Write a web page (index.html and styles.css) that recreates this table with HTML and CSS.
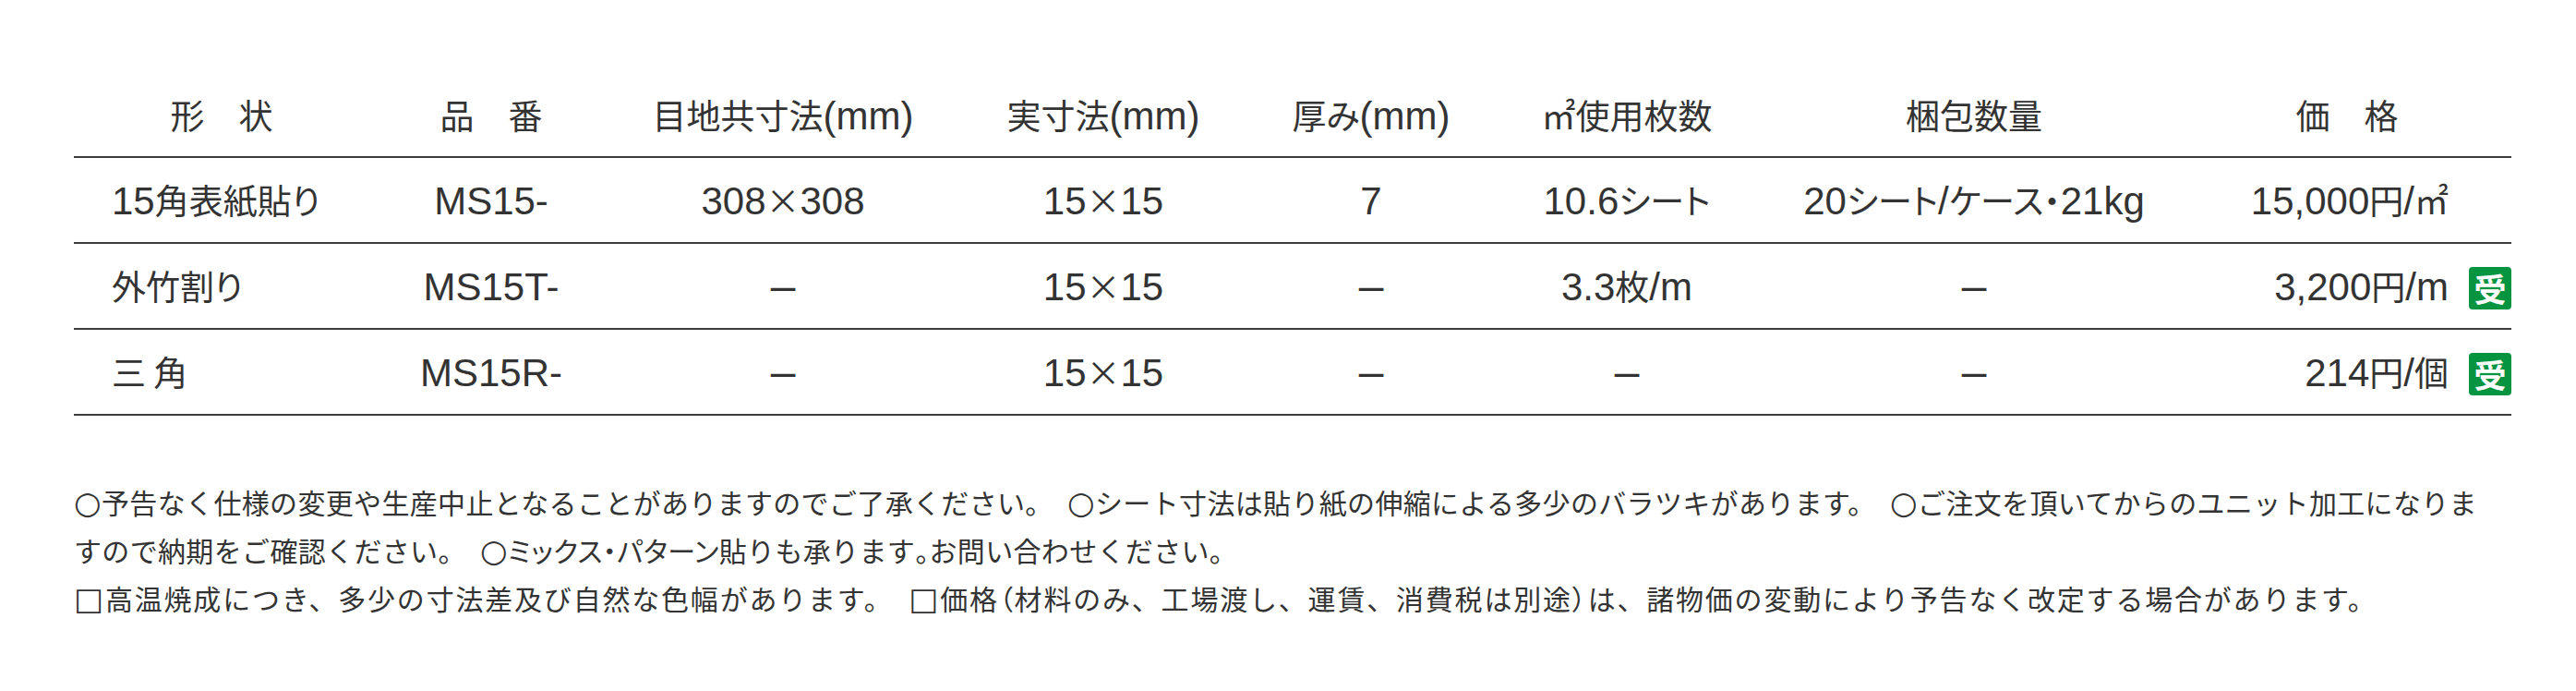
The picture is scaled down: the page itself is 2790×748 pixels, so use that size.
FILE: index.html
```html
<!DOCTYPE html>
<html lang="ja">
<head>
<meta charset="utf-8">
<title>15角表紙貼り 仕様</title>
<link rel="stylesheet" href="styles.css">
</head>
<body>
<div class="page">
  <div class="spec">
    <div class="row head">
      <div class="c">形　状</div>
      <div class="c">品　番</div>
      <div class="c">目地共寸法<span class="l">(mm)</span></div>
      <div class="c">実寸法<span class="l">(mm)</span></div>
      <div class="c">厚み<span class="l">(mm)</span></div>
      <div class="c">㎡使用枚数</div>
      <div class="c">梱包数量</div>
      <div class="c">価　格</div>
    </div>
    <div class="row item">
      <div class="c name"><span class="l">15</span>角表紙貼り</div>
      <div class="c"><span class="l">MS15-</span></div>
      <div class="c"><span class="l">308</span>×<span class="l">308</span></div>
      <div class="c"><span class="l">15</span>×<span class="l">15</span></div>
      <div class="c"><span class="l">7</span></div>
      <div class="c"><span class="l">10.6</span>シート</div>
      <div class="c"><span class="l">20</span>シート<span class="l">/</span>ケース・<span class="l">21kg</span></div>
      <div class="c price pad"><span class="l">15,000</span>円<span class="l">/</span>㎡</div>
    </div>
    <div class="row item">
      <div class="c name">外竹割り</div>
      <div class="c"><span class="l">MS15T-</span></div>
      <div class="c"><span class="dash">–</span></div>
      <div class="c"><span class="l">15</span>×<span class="l">15</span></div>
      <div class="c"><span class="dash">–</span></div>
      <div class="c"><span class="l">3.3</span>枚<span class="l">/m</span></div>
      <div class="c"><span class="dash">–</span></div>
      <div class="c price"><span class="l">3,200</span>円<span class="l">/m</span><span class="badge">受</span></div>
    </div>
    <div class="row item">
      <div class="c name">三 角</div>
      <div class="c"><span class="l">MS15R-</span></div>
      <div class="c"><span class="dash">–</span></div>
      <div class="c"><span class="l">15</span>×<span class="l">15</span></div>
      <div class="c"><span class="dash">–</span></div>
      <div class="c"><span class="dash">–</span></div>
      <div class="c"><span class="dash">–</span></div>
      <div class="c price"><span class="l">214</span>円<span class="l">/</span>個<span class="badge">受</span></div>
    </div>
  </div>
  <div class="notes">
    <p class="n1"><span class="mk">○</span>予告なく仕様の変更や生産中止となることがありますのでご了承ください。　<span class="mk">○</span>シート寸法は貼り紙の伸縮による多少のバラツキがあります。　<span class="mk">○</span>ご注文を頂いてからのユニット加工になりま<br>すので納期をご確認ください。　<span class="mk">○</span><span class="pr">ミックス・パターン</span>貼りも承ります<span class="pr">。</span>お問い合わせください。</p>
    <p class="n2"><span class="mk">□</span>高温焼成につき、多少の寸法差及び自然な色幅があります。　<span class="mk">□</span>価格<span class="pr">（</span>材料のみ、工場渡し、運賃、消費税は別途<span class="pr">）</span>は、諸物価の変動により予告なく改定する場合があります。</p>
  </div>
</div>
</body>
</html>
```

FILE: styles.css
```css
html, body {
  margin: 0;
  padding: 0;
  background: #ffffff;
}

body {
  color: #333333;
  font-family: "Noto Sans CJK JP", sans-serif;
}

.page {
  width: 2640px;
  padding: 80px 0 0 80px;
}

.row {
  display: grid;
  grid-template-columns: 320px 264px 368px 326px 254px 300px 452px 356px;
  font-feature-settings: "palt";
}

.c {
  font-size: 37px;
  text-align: center;
  white-space: nowrap;
}

.head .c {
  height: 89px;
  line-height: 89px;
}

.item {
  border-top: 2px solid #3c3c3c;
}

.item:last-child {
  border-bottom: 2px solid #3c3c3c;
}

.item .c {
  height: 91px;
  line-height: 91px;
}

.l {
  font-family: "Liberation Sans", sans-serif;
  font-size: 42px;
}

.dash {
  font-family: "Liberation Sans", sans-serif;
  font-size: 48px;
}

.name {
  text-align: left;
  padding-left: 41px;
}

.price {
  text-align: right;
}

.price.pad {
  padding-right: 68px;
}

.badge {
  display: inline-block;
  width: 46px;
  height: 46px;
  margin-left: 22px;
  border-radius: 4px;
  background: #079441;
  color: #ffffff;
  font-size: 35px;
  font-weight: 700;
  line-height: 46px;
  text-align: center;
  vertical-align: middle;
  position: relative;
  top: -3px;
}

.notes {
  margin-top: 68px;
}

.notes p {
  margin: 0;
  font-size: 30px;
  line-height: 51px;
  font-feature-settings: "fwid";
  white-space: nowrap;
}

.notes .pr {
  font-feature-settings: "palt";
}

.notes .mk {
  font-family: "DejaVu Sans", sans-serif;
  font-size: 34px;
}

.n1 {
  letter-spacing: 0.34px;
}

.n2 {
  letter-spacing: 1.8px;
}
```
